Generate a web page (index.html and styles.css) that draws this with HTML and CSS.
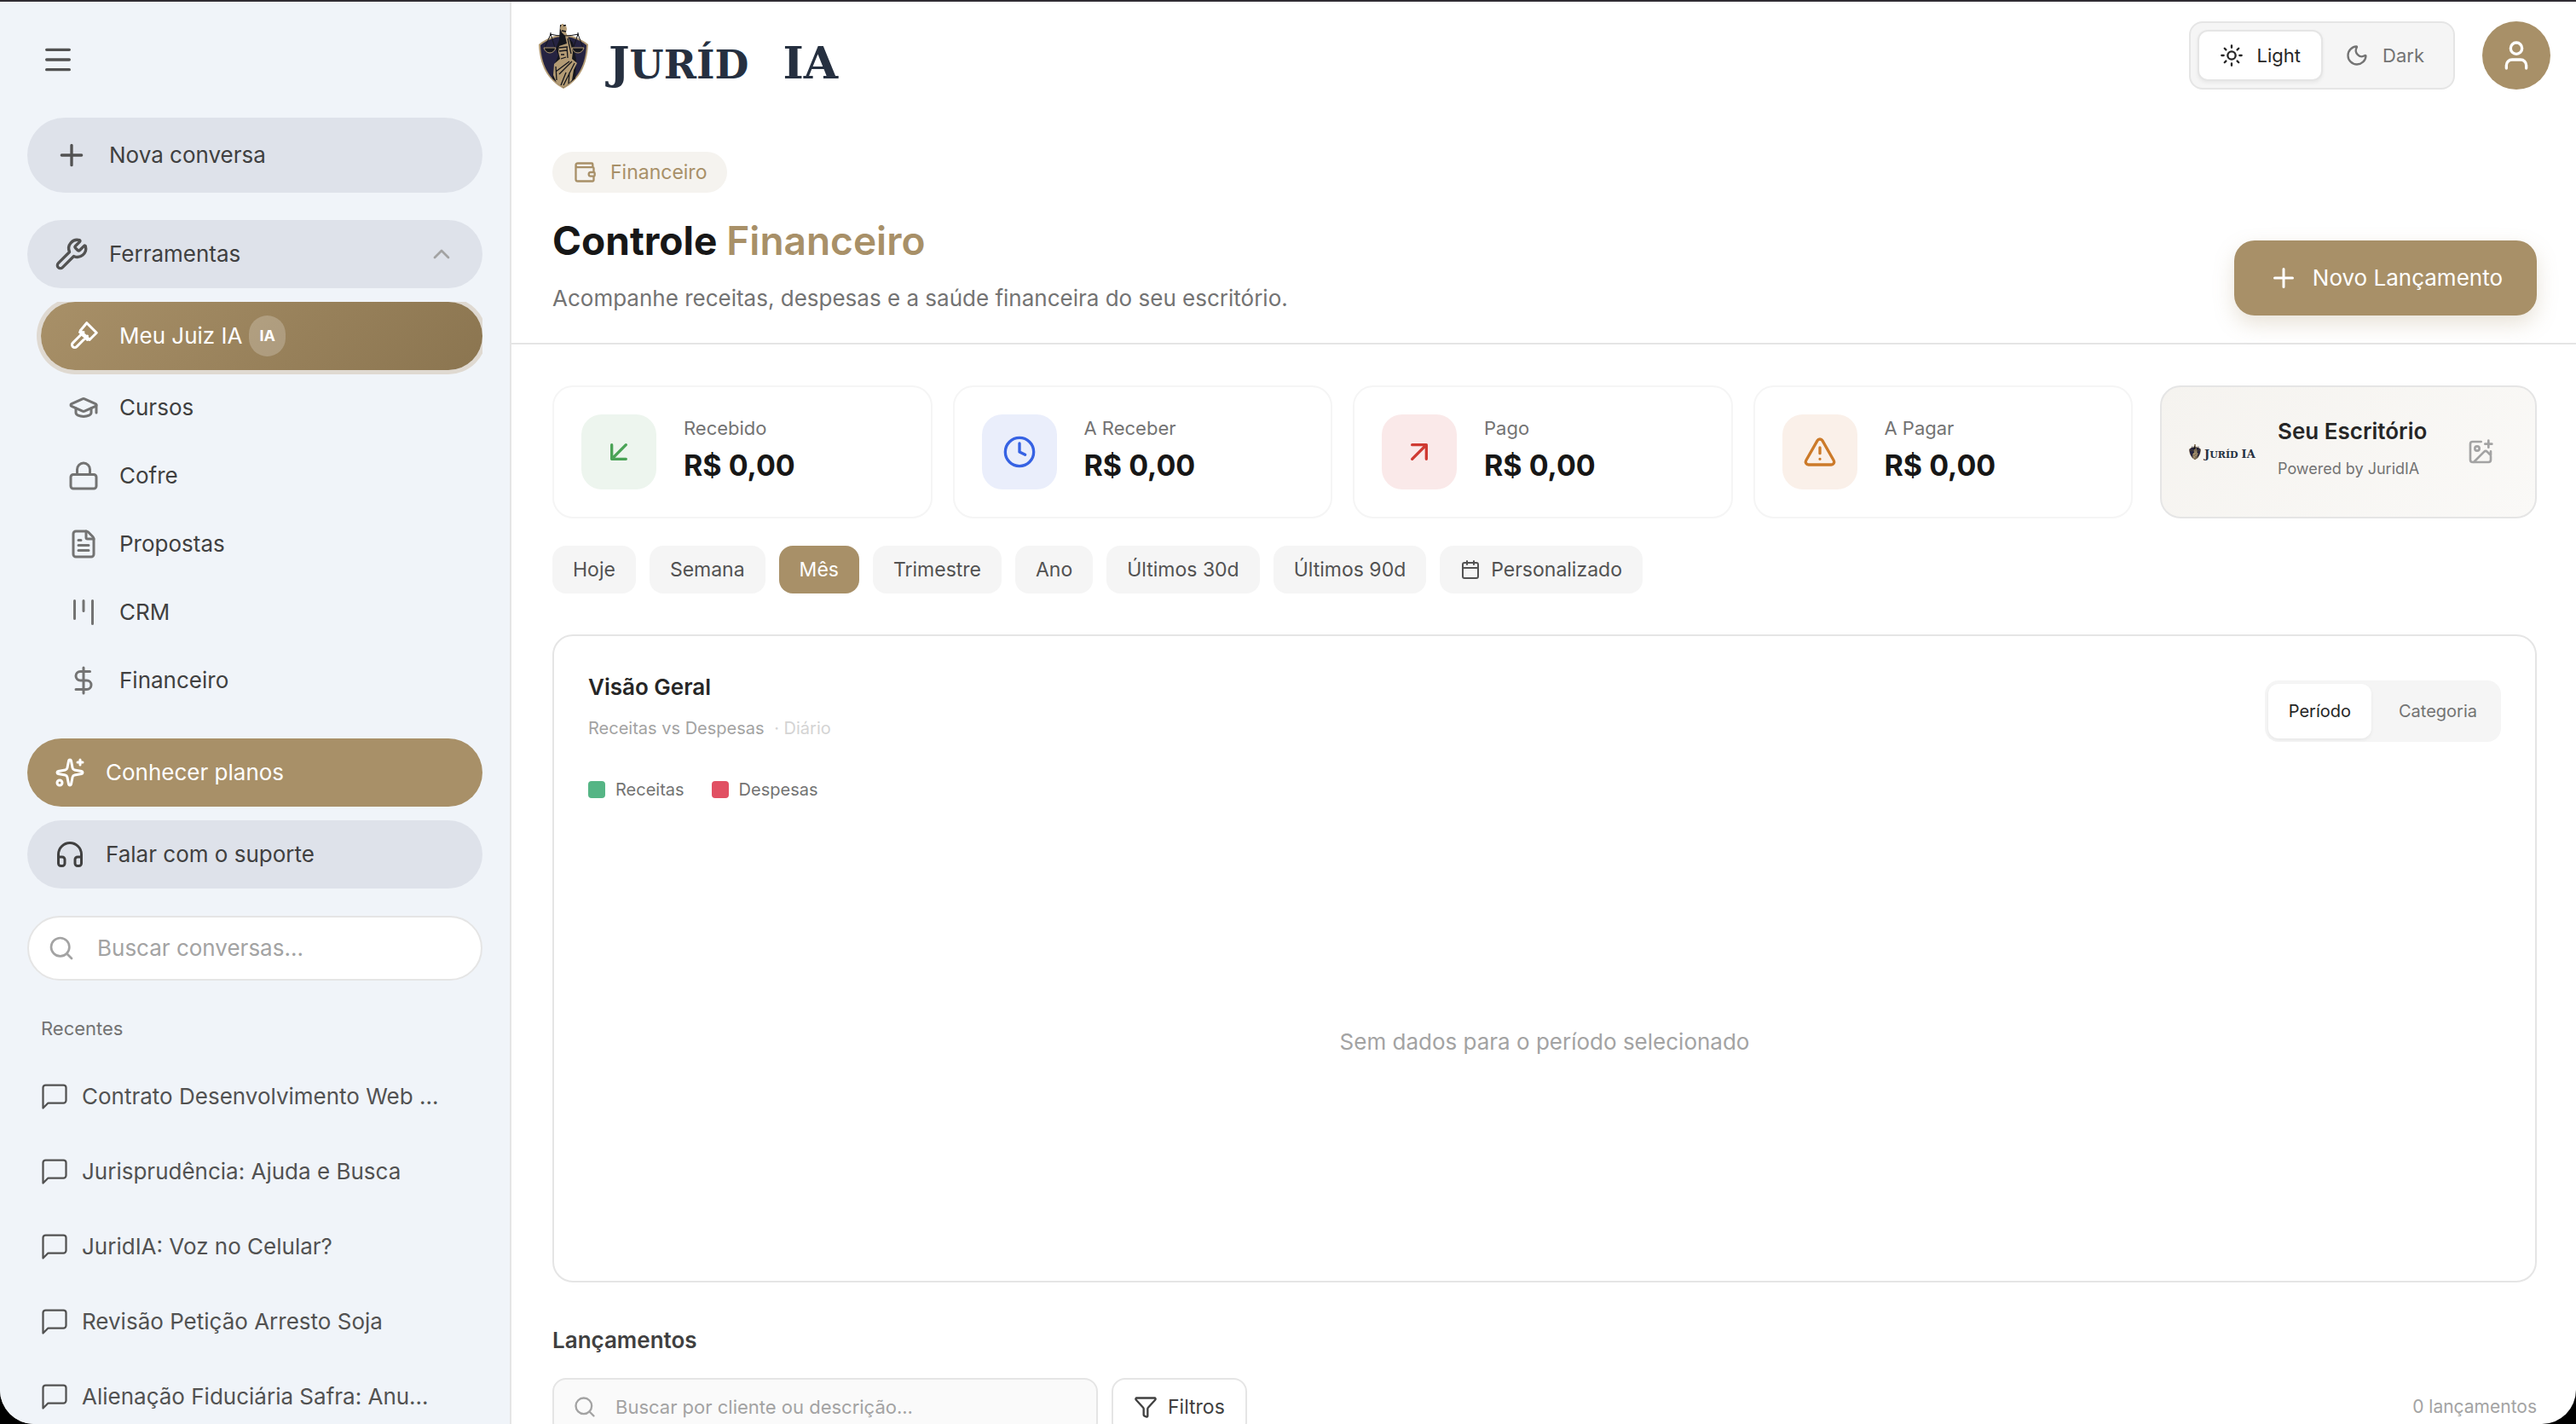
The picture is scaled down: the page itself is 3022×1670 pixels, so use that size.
FILE: index.html
```html
<!DOCTYPE html>
<html lang="pt-BR">
<head>
  <meta charset="UTF-8" />
  <title>Controle Financeiro | JuridIA</title>
  <meta name="viewport" content="width=device-width, initial-scale=1.0" />
  <link rel="stylesheet" href="styles.css">
</head>
<body>

  <!-- Icon sprite -->
  <svg class="sprite" aria-hidden="true">
    <symbol id="i-menu" viewBox="0 0 24 24"><path d="M4 5h16M4 12h16M4 19h16"/></symbol>
    <symbol id="i-plus" viewBox="0 0 24 24"><path d="M5 12h14M12 5v14"/></symbol>
    <symbol id="i-wrench" viewBox="0 0 24 24"><path d="M14.7 6.3a1 1 0 0 0 0 1.4l1.6 1.6a1 1 0 0 0 1.4 0l3.106-3.105c.32-.322.863-.22.983.218a6 6 0 0 1-8.259 7.057l-7.91 7.91a1 1 0 0 1-2.999-3l7.91-7.91a6 6 0 0 1 7.057-8.259c.438.12.54.662.219.984z"/></symbol>
    <symbol id="i-chevron" viewBox="0 0 24 24"><path d="m18 15-6-6-6 6"/></symbol>
    <symbol id="i-gavel" viewBox="0 0 24 24"><path d="m15 12-8.4 8.4a2.1 2.1 0 0 1-3-3L12 9M14.500 1.800l7.700 7.700-5.500 5.500-2.600-2.600-1.600-1.600-3-3zM9 9l6 6"/></symbol>
    <symbol id="i-cap" viewBox="0 0 24 24"><path d="M21.42 10.922a1 1 0 0 0-.019-1.838L12.83 5.18a2 2 0 0 0-1.66 0L2.6 9.08a1 1 0 0 0 0 1.832l8.57 3.908a2 2 0 0 0 1.66 0z"/><path d="M22 10v6M6 12.500V16a6 3 0 0 0 12 0v-3.500"/></symbol>
    <symbol id="i-lock" viewBox="0 0 24 24"><rect width="20" height="11" x="2" y="11" rx="2"/><path d="M7 11V7a5 5 0 0 1 10 0v4"/></symbol>
    <symbol id="i-file" viewBox="0 0 24 24"><path d="M6 22a2 2 0 0 1-2-2V4a2 2 0 0 1 2-2h8a2.400 2.400 0 0 1 1.704.706l3.588 3.588A2.400 2.400 0 0 1 20 8v12a2 2 0 0 1-2 2z"/><path d="M14 2v5a1 1 0 0 0 1 1h5M10 9H8M16 13H8M16 17H8"/></symbol>
    <symbol id="i-kanban" viewBox="0 0 24 24"><path d="M5 3v14M12 3v8M19 3v18"/></symbol>
    <symbol id="i-dollar" viewBox="0 0 24 24"><path d="M12 2v20M17 5H9.500a3.500 3.500 0 0 0 0 7h5a3.500 3.500 0 0 1 0 7H6"/></symbol>
    <symbol id="i-sparkles" viewBox="0 0 24 24"><path d="M11.017 2.814a1 1 0 0 1 1.966 0l1.051 5.558a2 2 0 0 0 1.594 1.594l5.558 1.051a1 1 0 0 1 0 1.966l-5.558 1.051a2 2 0 0 0-1.594 1.594l-1.051 5.558a1 1 0 0 1-1.966 0l-1.051-5.558a2 2 0 0 0-1.594-1.594l-5.558-1.051a1 1 0 0 1 0-1.966l5.558-1.051a2 2 0 0 0 1.594-1.594z"/><path d="M20 2v4M22 4h-4"/><circle cx="4" cy="20" r="2"/></symbol>
    <symbol id="i-headphones" viewBox="0 0 24 24"><path d="M3 14h3a2 2 0 0 1 2 2v3a2 2 0 0 1-2 2H5a2 2 0 0 1-2-2v-7a9 9 0 0 1 18 0v7a2 2 0 0 1-2 2h-1a2 2 0 0 1-2-2v-3a2 2 0 0 1 2-2h3"/></symbol>
    <symbol id="i-search" viewBox="0 0 24 24"><circle cx="11" cy="11" r="8"/><path d="m21 21-4.300-4.300"/></symbol>
    <symbol id="i-chat" viewBox="0 0 24 24"><path d="M21 15a2 2 0 0 1-2 2H7l-4 4V5a2 2 0 0 1 2-2h14a2 2 0 0 1 2 2z"/></symbol>
    <symbol id="i-sun" viewBox="0 0 24 24"><circle cx="12" cy="12" r="4"/><path d="M12 2v2M12 20v2M4.930 4.930l1.410 1.410M17.660 17.660l1.410 1.410M2 12h2M20 12h2M6.340 17.660l-1.410 1.410M19.070 4.930l-1.410 1.410"/></symbol>
    <symbol id="i-moon" viewBox="0 0 24 24"><path d="M20.985 12.486a9 9 0 1 1-9.473-9.472c.405-.022.617.46.402.803a6 6 0 0 0 8.268 8.268c.344-.215.825-.004.803.401"/></symbol>
    <symbol id="i-user" viewBox="0 0 24 24"><path d="M19 21v-2a4 4 0 0 0-4-4H9a4 4 0 0 0-4 4v2"/><circle cx="12" cy="7" r="4"/></symbol>
    <symbol id="i-wallet" viewBox="0 0 24 24"><path d="M20 7V4a1 1 0 0 0-1-1H5a2 2 0 0 0 0 4h15a1 1 0 0 1 1 1v4h-3a2 2 0 0 0 0 4h3a1 1 0 0 0 1-1v-2a1 1 0 0 0-1-1M3 5v14a2 2 0 0 0 2 2h15a1 1 0 0 0 1-1v-4"/></symbol>
    <symbol id="i-in" viewBox="0 0 24 24"><path d="M17 7 7 17M17 17H7V7"/></symbol>
    <symbol id="i-out" viewBox="0 0 24 24"><path d="M7 7h10v10M7 17 17 7"/></symbol>
    <symbol id="i-clock" viewBox="0 0 24 24"><circle cx="12" cy="12" r="10"/><path d="M12 6v6l4 2"/></symbol>
    <symbol id="i-alert" viewBox="0 0 24 24"><path d="m21.730 18-8-14a2 2 0 0 0-3.480 0l-8 14A2 2 0 0 0 4 21h16a2 2 0 0 0 1.730-3M12 9v4M12 17h.01"/></symbol>
    <symbol id="i-image" viewBox="0 0 24 24"><path d="M16 5h6M19 2v6M21 11.500V19a2 2 0 0 1-2 2H5a2 2 0 0 1-2-2V5a2 2 0 0 1 2-2h7.500M21 15l-3.086-3.086a2 2 0 0 0-2.828 0L6 21"/><circle cx="9" cy="9" r="2"/></symbol>
    <symbol id="i-calendar" viewBox="0 0 24 24"><path d="M8 2v4M16 2v4M3 10h18"/><rect width="18" height="18" x="3" y="4" rx="2"/></symbol>
    <symbol id="i-filter" viewBox="0 0 24 24"><path d="M10 20a1 1 0 0 0 .553.895l2 1A1 1 0 0 0 14 21v-7a2 2 0 0 1 .517-1.341L21.740 4.670A1 1 0 0 0 21 3H3a1 1 0 0 0-.742 1.670l7.225 7.989A2 2 0 0 1 10 14z"/></symbol>

    <!-- Lady Justice shield -->
    <symbol id="i-shield" viewBox="0 0 58 77">
      <path fill="#b39b74" d="M29 14c9 0 19 3 29 11-1 24-10 42-29 52C10 67 1 49 0 25c10-8 20-11 29-11z"/>
      <path fill="#252341" d="M29 16c9 0 18 3 27 10-1 22-9 39-27 49C11 65 3 48 2 26c9-7 18-10 27-10z"/>
      <path fill="#15161c" d="M25 2h7v12l8 9 4 20-1 22-14 11-13-11 2-15 5-12-3-8 4-10z"/>
      <path fill="#b39b74" d="M27 1h2v3l3-1 1 4-1 4 4 9 4 14-1 8 6 5-4 8-2 12-6 6-4 3-8-6-4-9 1-13 7-6-2-8 1-7 9-3-2-9-4-4-2-5z"/>
      <path fill="none" stroke="#15161c" stroke-width="1.300" d="M27 9l5 1M24 29l10-1M24 33l9-1M34 18l4 18M33 28l1 13M26 42l6-2M39 45L24 60M42 47L29 73M36 45L20 57M32 58l-6 15M36 58l-1 13M20 51l1 16M26 37h4"/>
      <path fill="none" stroke="#15161c" stroke-width="1" d="M13 13q16 4 34 0M14 13L7 29M14 13l5 16M46 13l-5 15M46 13l6 16M14 11v4M46 11v4"/>
      <path fill="#15161c" stroke="#b39b74" stroke-width="1" d="M6 29h14q-2 6-7 6t-7-6zM39 29h14q-2 6-7 6t-7-6z"/>
    </symbol>
  </svg>

  <div class="app">

    <!-- === SIDEBAR === -->
    <aside class="sidebar">
      <button class="menu-btn" aria-label="Menu"><svg class="icon icon-lg"><use href="#i-menu"/></svg></button>

      <button class="pill pill-tall"><svg class="icon icon-lg"><use href="#i-plus"/></svg>Nova conversa</button>

      <button class="pill tools-btn" aria-expanded="true">
        <svg class="icon icon-lg"><use href="#i-wrench"/></svg>
        <span class="grow">Ferramentas</span>
        <svg class="icon icon-sm muted"><use href="#i-chevron"/></svg>
      </button>

      <nav class="tools">
        <a class="tool active" href="#"><svg class="icon"><use href="#i-gavel"/></svg><span>Meu Juiz IA</span><span class="tag">IA</span></a>
        <a class="tool" href="#"><svg class="icon"><use href="#i-cap"/></svg>Cursos</a>
        <a class="tool" href="#"><svg class="icon"><use href="#i-lock"/></svg>Cofre</a>
        <a class="tool" href="#"><svg class="icon"><use href="#i-file"/></svg>Propostas</a>
        <a class="tool" href="#"><svg class="icon"><use href="#i-kanban"/></svg>CRM</a>
        <a class="tool" href="#"><svg class="icon"><use href="#i-dollar"/></svg>Financeiro</a>
      </nav>

      <div class="promo">
        <button class="pill gold"><svg class="icon"><use href="#i-sparkles"/></svg>Conhecer planos</button>
        <button class="pill"><svg class="icon"><use href="#i-headphones"/></svg>Falar com o suporte</button>
      </div>

      <label class="side-search">
        <svg class="icon icon-sm"><use href="#i-search"/></svg>
        <input type="text" placeholder="Buscar conversas..." aria-label="Buscar conversas">
      </label>

      <h2 class="recent-title">Recentes</h2>
      <nav class="recent">
        <a href="#"><svg class="icon thin"><use href="#i-chat"/></svg>Contrato Desenvolvimento Web ...</a>
        <a href="#"><svg class="icon thin"><use href="#i-chat"/></svg>Jurisprudência: Ajuda e Busca</a>
        <a href="#"><svg class="icon thin"><use href="#i-chat"/></svg>JuridIA: Voz no Celular?</a>
        <a href="#"><svg class="icon thin"><use href="#i-chat"/></svg>Revisão Petição Arresto Soja</a>
        <a href="#"><svg class="icon thin"><use href="#i-chat"/></svg>Alienação Fiduciária Safra: Anu...</a>
      </nav>
    </aside>

    <!-- === MAIN === -->
    <main class="main">
      <header class="topbar">
        <a class="logo" href="#">
          <svg class="shield"><use href="#i-shield"/></svg>
          <span class="logo-text"><span>J<small>URÍD</small></span><span>IA</span></span>
        </a>
        <div class="theme">
          <button class="theme-btn on"><svg class="icon icon-xs"><use href="#i-sun"/></svg>Light</button>
          <button class="theme-btn"><svg class="icon icon-xs"><use href="#i-moon"/></svg>Dark</button>
        </div>
        <button class="avatar" aria-label="Conta"><svg class="icon icon-lg"><use href="#i-user"/></svg></button>
      </header>

      <section class="hero">
        <div>
          <span class="crumb"><svg class="icon icon-xs"><use href="#i-wallet"/></svg>Financeiro</span>
          <h1>Controle <span>Financeiro</span></h1>
          <p>Acompanhe receitas, despesas e a saúde financeira do seu escritório.</p>
        </div>
        <button class="new-btn"><svg class="icon"><use href="#i-plus"/></svg>Novo Lançamento</button>
      </section>

      <div class="content">
        <div class="summary">
          <div class="stats">
            <div class="stat">
              <span class="tile green"><svg class="icon icon-lg"><use href="#i-in"/></svg></span>
              <div class="stat-text"><span class="label">Recebido</span><strong>R$ 0,00</strong></div>
            </div>
            <div class="stat">
              <span class="tile blue"><svg class="icon icon-lg"><use href="#i-clock"/></svg></span>
              <div class="stat-text"><span class="label">A Receber</span><strong>R$ 0,00</strong></div>
            </div>
            <div class="stat">
              <span class="tile red"><svg class="icon icon-lg"><use href="#i-out"/></svg></span>
              <div class="stat-text"><span class="label">Pago</span><strong>R$ 0,00</strong></div>
            </div>
            <div class="stat">
              <span class="tile orange"><svg class="icon icon-lg"><use href="#i-alert"/></svg></span>
              <div class="stat-text"><span class="label">A Pagar</span><strong>R$ 0,00</strong></div>
            </div>
          </div>
          <div class="office">
            <span class="mini-logo">
              <svg class="shield"><use href="#i-shield"/></svg>
              <span class="logo-text"><span>J<small>URÍD</small></span><span>IA</span></span>
            </span>
            <div class="office-text">
              <h2>Seu Escritório</h2>
              <p>Powered by JuridIA</p>
            </div>
            <button class="logo-btn" aria-label="Alterar logo"><svg class="icon icon-sm"><use href="#i-image"/></svg></button>
          </div>
        </div>

        <div class="periods">
          <button>Hoje</button>
          <button>Semana</button>
          <button class="on">Mês</button>
          <button>Trimestre</button>
          <button>Ano</button>
          <button>Últimos 30d</button>
          <button>Últimos 90d</button>
          <button><svg class="icon icon-2xs"><use href="#i-calendar"/></svg>Personalizado</button>
        </div>

        <section class="chart">
          <div class="chart-head">
            <div>
              <h2>Visão Geral</h2>
              <p>Receitas vs Despesas <span>· Diário</span></p>
            </div>
            <div class="view-toggle">
              <button class="on">Período</button>
              <button>Categoria</button>
            </div>
          </div>
          <div class="legend">
            <span><i class="dot income"></i>Receitas</span>
            <span><i class="dot expense"></i>Despesas</span>
          </div>
          <div class="empty">Sem dados para o período selecionado</div>
        </section>

        <h2 class="section-title">Lançamentos</h2>
        <div class="toolbar">
          <label class="search">
            <svg class="icon icon-xs"><use href="#i-search"/></svg>
            <input type="text" placeholder="Buscar por cliente ou descrição..." aria-label="Buscar lançamentos">
          </label>
          <button class="filter-btn"><svg class="icon icon-xs"><use href="#i-filter"/></svg>Filtros</button>
          <span class="count">0 lançamentos</span>
        </div>
      </div>
    </main>
  </div>

</body>
</html>
```
FILE: styles.css
```css
:root {
  --gold: #a89068;
  --gold-soft: #f5f3ef;
  --side-bg: #f0f4f9;
  --side-pill: #dee2ea;
  --border: #e5e5e5;
  --gray-50: #fafafa;
  --gray-100: #f5f5f5;
  --gray-400: #a3a3a3;
  --gray-500: #737373;
  --gray-600: #525252;
  --gray-700: #404040;
  --gray-900: #171717;
}

* {
  box-sizing: border-box;
}

body {
  margin: 0;
  background: #000;
  color: var(--gray-700);
  font-family: Inter, "Liberation Sans", sans-serif;
  font-size: 26px;
  line-height: 40px;
}

button,
input {
  font: inherit;
  color: inherit;
  border: none;
  background: none;
  padding: 0;
}
button {
  cursor: pointer;
  white-space: nowrap;
}
a {
  color: inherit;
  text-decoration: none;
}
h1, h2, p {
  margin: 0;
}
input::placeholder {
  color: var(--gray-400);
  opacity: 1;
}

.sprite {
  display: none;
}
.icon {
  width: 36px;
  height: 36px;
  flex: none;
  fill: none;
  stroke: currentColor;
  stroke-width: 2;
  stroke-linecap: round;
  stroke-linejoin: round;
}
.icon-lg { width: 40px; height: 40px; }
.icon-sm { width: 32px; height: 32px; }
.icon-xs { width: 28px; height: 28px; }
.icon-2xs { width: 24px; height: 24px; }
.thin { stroke-width: 1.5; }
.muted { color: var(--gray-400); }
.grow { flex: 1; }

.app {
  display: flex;
  height: 100vh;
  overflow: hidden;
  background: #fff;
  border-top: 2px solid #302c33;
  border-radius: 0 0 40px 40px;
}

/* --- Sidebar --- */
.sidebar {
  width: 600px;
  flex: none;
  padding: 48px 32px 0;
  background: var(--side-bg);
  border-right: 2px solid var(--border);
  overflow: hidden;
}
.menu-btn {
  display: flex;
  margin: 0 16px 48px;
  color: var(--gray-600);
}
.pill {
  display: flex;
  align-items: center;
  gap: 24px;
  width: 100%;
  height: 80px;
  padding: 0 32px;
  border-radius: 40px;
  background: var(--side-pill);
  text-align: left;
}
.pill-tall {
  height: 88px;
  border-radius: 44px;
}
.pill .icon-lg {
  color: var(--gray-600);
}
.pill .muted {
  color: var(--gray-400);
}
.tools-btn {
  margin-top: 32px;
}
.tools {
  margin-top: 16px;
  padding: 0 0 8px 16px;
  overflow: hidden;
}
.tool {
  display: flex;
  align-items: center;
  gap: 24px;
  height: 80px;
  padding: 0 32px;
}
.tool .icon {
  color: var(--gray-500);
}
.tool.active {
  gap: 8px;
  margin-bottom: 4px;
  border-radius: 40px;
  color: #fff;
  background: linear-gradient(135deg, #a89068, #8b7550);
  box-shadow: 0 0 0 5px #dfd9d1;
}
.tool.active .icon {
  color: #fff;
  margin-right: 16px;
}
.tag {
  padding: 4px 12px;
  border-radius: 24px;
  background: rgba(255, 255, 255, 0.22);
  font-size: 18px;
  font-weight: 700;
}
.promo {
  display: grid;
  gap: 16px;
  margin-top: 20px;
}
.gold {
  background: var(--gold);
  color: #fff;
}
.side-search {
  display: flex;
  align-items: center;
  gap: 26px;
  height: 76px;
  margin-top: 32px;
  padding: 0 22px;
  border: 2px solid var(--border);
  border-radius: 38px;
  background: #fff;
  color: var(--gray-400);
}
.side-search input {
  flex: 1;
  min-width: 0;
}
.recent-title {
  margin: 36px 16px 16px;
  font-size: 22px;
  font-weight: 400;
  color: var(--gray-500);
}
.recent a {
  display: flex;
  align-items: center;
  gap: 14px;
  height: 88px;
  padding: 0 14px;
  color: var(--gray-600);
  white-space: nowrap;
}

/* --- Top bar --- */
.main {
  flex: 1;
  min-width: 0;
}
.topbar {
  display: flex;
  align-items: center;
  gap: 32px;
  height: 126px;
  padding: 0 30px 0 32px;
}
.logo {
  display: flex;
  align-items: center;
  gap: 24px;
  margin-right: auto;
}
.shield {
  width: 58px;
  height: 77px;
}
.logo-text {
  display: flex;
  gap: 40px;
  padding-top: 20px;
  font-family: "DejaVu Serif", serif;
  font-weight: 700;
  font-size: 52px;
  color: #263040;
}
.logo-text small {
  font-size: 46px;
}
.theme {
  display: flex;
  padding: 8px;
  border: 2px solid var(--border);
  border-radius: 16px;
  background: var(--gray-100);
}
.theme-btn {
  display: flex;
  align-items: center;
  gap: 16px;
  height: 60px;
  padding: 0 24px;
  border: 2px solid transparent;
  border-radius: 12px;
  font-size: 22px;
  color: var(--gray-500);
}
.theme-btn.on {
  border-color: var(--border);
  background: #fff;
  color: #262626;
  box-shadow: 0 2px 4px rgba(0, 0, 0, 0.06);
}
.avatar {
  display: grid;
  place-items: center;
  width: 80px;
  height: 80px;
  border-radius: 50%;
  background: var(--gold);
  color: #fff;
}

/* --- Page heading --- */
.hero {
  display: flex;
  justify-content: space-between;
  align-items: flex-end;
  padding: 50px 46px 32px 48px;
  border-bottom: 2px solid var(--border);
}
.crumb {
  display: inline-flex;
  align-items: center;
  gap: 16px;
  height: 48px;
  padding: 0 24px;
  border-radius: 24px;
  background: var(--gold-soft);
  color: var(--gold);
  font-size: 23px;
  vertical-align: top;
}
h1 {
  margin: 24px 0 16px;
  font-size: 46px;
  line-height: 64px;
  font-weight: 700;
  color: var(--gray-900);
}
h1 span {
  font-weight: 600;
  color: var(--gold);
}
.hero p {
  color: var(--gray-500);
}
.new-btn {
  display: flex;
  align-items: center;
  gap: 16px;
  height: 88px;
  padding: 0 40px;
  border-radius: 24px;
  background: var(--gold);
  color: #fff;
  box-shadow: 0 10px 24px rgba(168, 144, 104, 0.25);
}

/* --- Summary cards --- */
.content {
  padding: 48px 46px 0 48px;
}
.summary {
  display: flex;
  gap: 32px;
}
.stats {
  flex: 1;
  display: grid;
  grid-template-columns: repeat(4, 1fr);
  gap: 24px;
}
.stat,
.office {
  display: flex;
  align-items: center;
  height: 156px;
  padding: 0 32px;
  border: 2px solid var(--gray-100);
  border-radius: 24px;
}
.stat {
  gap: 32px;
}
.stat-text {
  padding-bottom: 8px;
}
.label,
.stat strong {
  display: block;
}
.label {
  font-size: 22px;
  color: var(--gray-500);
}
.stat strong {
  line-height: 48px;
  font-size: 34px;
  color: var(--gray-900);
}
.tile {
  display: grid;
  place-items: center;
  width: 88px;
  height: 88px;
  border-radius: 24px;
}
.green { background: #edf5ee; color: #4aa356; }
.blue { background: #eaeefb; color: #3662e3; }
.red { background: #fae9e9; color: #cf3a32; }
.orange { background: #faf0e9; color: #cc7a29; }
.office {
  gap: 24px;
  width: 442px;
  border-color: var(--border);
  background: linear-gradient(135deg, #f5f3ef, #faf9f7);
}
.office-text {
  flex: 1;
  padding-bottom: 4px;
}
.office h2 {
  margin-bottom: 4px;
  font-size: 26px;
  font-weight: 600;
  color: #262626;
}
.office p {
  font-size: 18px;
  color: var(--gray-500);
}
.mini-logo {
  display: flex;
  align-items: center;
  gap: 4px;
  width: 80px;
}
.mini-logo .shield {
  width: 14px;
  height: 22px;
}
.mini-logo .logo-text {
  gap: 4px;
  padding-top: 6px;
  font-size: 13px;
}
.mini-logo small {
  font-size: 11px;
}
.logo-btn {
  display: flex;
  padding: 16px;
  color: var(--gray-400);
}

/* --- Period filter --- */
.periods {
  display: flex;
  flex-wrap: wrap;
  gap: 16px;
  margin-top: 32px;
}
.periods button {
  display: flex;
  align-items: center;
  gap: 12px;
  height: 56px;
  padding: 0 24px;
  border-radius: 16px;
  background: var(--gray-100);
  color: var(--gray-600);
  font-size: 23px;
}
.periods .on {
  background: var(--gold);
  color: #fff;
}

/* --- Chart card --- */
.chart {
  margin-top: 48px;
  padding: 40px;
  border: 2px solid var(--border);
  border-radius: 24px;
}
.chart-head {
  display: flex;
  justify-content: space-between;
  align-items: flex-end;
}
.chart h2 {
  font-size: 26px;
  font-weight: 600;
  color: #262626;
}
.chart p {
  margin-top: 12px;
  line-height: 32px;
  font-size: 20px;
  color: var(--gray-400);
}
.chart p span {
  margin-left: 6px;
  color: #d4d4d4;
}
.view-toggle {
  display: flex;
  gap: 8px;
  padding: 4px;
  border-radius: 16px;
  background: var(--gray-100);
}
.view-toggle button {
  height: 64px;
  padding: 0 24px;
  border-radius: 12px;
  font-size: 20px;
  color: var(--gray-500);
}
.view-toggle .on {
  background: #fff;
  color: #262626;
  box-shadow: 0 2px 4px rgba(0, 0, 0, 0.06);
}
.legend {
  display: flex;
  gap: 32px;
  margin-top: 40px;
  line-height: 32px;
  font-size: 20px;
  color: var(--gray-500);
}
.legend span {
  display: flex;
  align-items: center;
  gap: 12px;
}
.dot {
  width: 20px;
  height: 20px;
  border-radius: 4px;
}
.income { background: #55b585; }
.expense { background: #e15063; }
.empty {
  display: grid;
  place-items: center;
  height: 480px;
  margin-top: 40px;
  color: var(--gray-400);
}

/* --- Entries --- */
.section-title {
  margin: 48px 0 24px;
  font-size: 26px;
  font-weight: 600;
}
.toolbar {
  display: flex;
  align-items: center;
  gap: 16px;
}
.search,
.filter-btn {
  display: flex;
  align-items: center;
  height: 68px;
  border: 2px solid var(--border);
  border-radius: 16px;
}
.search {
  gap: 22px;
  width: 640px;
  padding: 0 22px;
  background: var(--gray-50);
  font-size: 22px;
  color: var(--gray-400);
}
.search input {
  flex: 1;
  min-width: 0;
}
.filter-btn {
  gap: 12px;
  padding: 0 24px;
  font-size: 23px;
}
.count {
  margin-left: auto;
  font-size: 21px;
  color: var(--gray-400);
}
```
